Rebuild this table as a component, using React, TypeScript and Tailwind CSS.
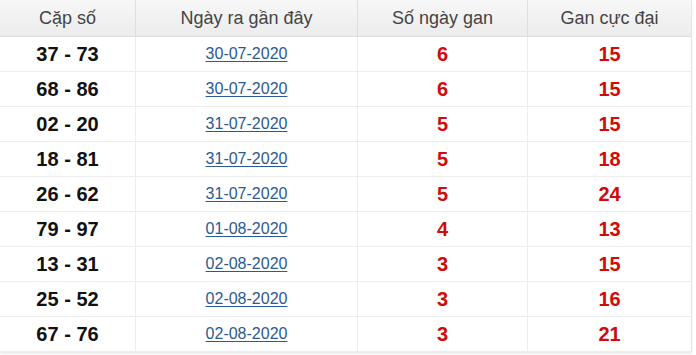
const rows = [
  { pair: "37 - 73", date: "30-07-2020", days: 6, max: 15 },
  { pair: "68 - 86", date: "30-07-2020", days: 6, max: 15 },
  { pair: "02 - 20", date: "31-07-2020", days: 5, max: 15 },
  { pair: "18 - 81", date: "31-07-2020", days: 5, max: 18 },
  { pair: "26 - 62", date: "31-07-2020", days: 5, max: 24 },
  { pair: "79 - 97", date: "01-08-2020", days: 4, max: 13 },
  { pair: "13 - 31", date: "02-08-2020", days: 3, max: 15 },
  { pair: "25 - 52", date: "02-08-2020", days: 3, max: 16 },
  { pair: "67 - 76", date: "02-08-2020", days: 3, max: 21 },
];

const cols = "grid grid-cols-[135px_222px_170px_164px]";

export default function App() {
  return (
    <div className="w-[696px] h-[355px] bg-white overflow-hidden font-['Liberation_Sans',Arial,sans-serif]">
      <div className="w-[692px] border-r border-[#e6e6e6] shadow-[0_2px_2px_rgba(0,0,0,0.08)]">
        {/* Header */}
        <div className={`${cols} h-[37px] bg-gradient-to-b from-[#f7f7f7] to-[#ececec] border-b border-[#dcdcdc] text-[18px] text-[#444]`}>
          <div className="flex items-center justify-center">Cặp số</div>
          <div className="flex items-center justify-center border-l border-[#dedede]">Ngày ra gần đây</div>
          <div className="flex items-center justify-center border-l border-[#dedede]">Số ngày gan</div>
          <div className="flex items-center justify-center border-l border-[#dedede]">Gan cực đại</div>
        </div>

        {/* Rows */}
        {rows.map((r, i) => (
          <div key={i} className={`${cols} h-[35px] border-b border-[#ececec]`}>
            <div className="flex items-center justify-center text-[20px] font-bold text-[#111]">{r.pair}</div>
            <div className="flex items-center justify-center border-l border-[#ececec]">
              <a href="#" className="text-[16px] text-[#2a5a93] underline underline-offset-2">{r.date}</a>
            </div>
            <div className="flex items-center justify-center border-l border-[#ececec] text-[20px] font-bold text-[#d10a0a]">{r.days}</div>
            <div className="flex items-center justify-center border-l border-[#ececec] text-[20px] font-bold text-[#d10a0a]">{r.max}</div>
          </div>
        ))}
      </div>
    </div>
  );
}
